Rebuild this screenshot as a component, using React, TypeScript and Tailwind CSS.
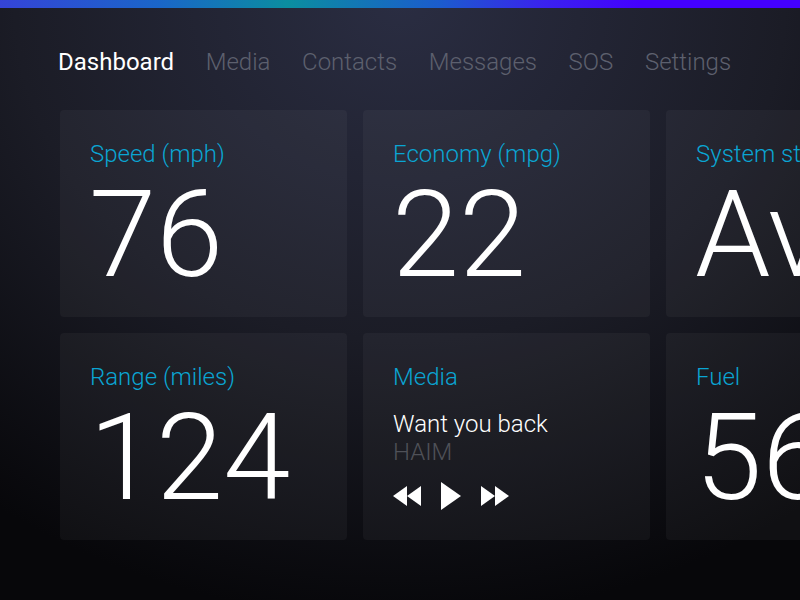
const nav = ['Dashboard', 'Media', 'Contacts', 'Messages', 'SOS', 'Settings']

const stats = [
  { label: 'Speed (mph)', value: '76' },
  { label: 'Economy (mpg)', value: '22' },
  { label: 'System status', value: 'Available' },
]

function Card({ children }: { children: React.ReactNode }) {
  return <div className="h-[207px] rounded bg-white/[0.04] pl-[30px] pt-[29px] overflow-hidden">{children}</div>
}

function Label({ text }: { text: string }) {
  return <div className="text-[24px] leading-[30px] font-light text-[#0aa5d3] whitespace-nowrap">{text}</div>
}

function Big({ value }: { value: string }) {
  return <div className="text-[121px] leading-[100px] pt-[16px] font-light text-white whitespace-nowrap -ml-[1px]">{value}</div>
}

export default function App() {
  return (
    <div
      className="w-[800px] h-[600px] overflow-hidden relative font-['Roboto',sans-serif]"
      style={{ background: 'radial-gradient(ellipse 700px 620px at 400px 0px, #2a2d42 0%, #1b1c26 55%, #07070a 100%)' }}
    >
      <div className="h-[8px] bg-[linear-gradient(90deg,#3544d8_0%,#1a66c8_20%,#0b8ea0_36%,#1b5ccd_55%,#3a22ee_68%,#4400ff_80%,#4400ff_100%)]" />

      <nav className="flex gap-[31.6px] pl-[58px] pt-[36px] h-[102px] text-[24px] font-light">
        {nav.map((n, i) => (
          <span key={n} className={i === 0 ? 'text-white font-normal' : 'text-[#5d606e]'}>{n}</span>
        ))}
      </nav>

      <div className="grid grid-cols-[287px_287px_287px] gap-[16px] pl-[60px] w-[1000px]">
        {stats.map(s => (
          <Card key={s.label}>
            <Label text={s.label} />
            <Big value={s.value} />
          </Card>
        ))}

        <Card>
          <Label text="Range (miles)" />
          <Big value="124" />
        </Card>

        <Card>
          <Label text="Media" />
          <div className="mt-[18px] text-[24px] leading-[28px] font-light text-white">Want you back</div>
          <div className="text-[24px] leading-[28px] font-light text-[#4f5158]">HAIM</div>
          <div className="flex items-center gap-[20px] mt-[16px]">
            <svg width="28" height="20" viewBox="0 0 28 20" fill="white">
              <polygon points="0,10 14,0 14,20" />
              <polygon points="14,10 28,0 28,20" />
            </svg>
            <svg width="20" height="28" viewBox="0 0 20 28" fill="white">
              <polygon points="0,0 20,14 0,28" />
            </svg>
            <svg width="28" height="20" viewBox="0 0 28 20" fill="white">
              <polygon points="0,0 14,10 0,20" />
              <polygon points="14,0 28,10 14,20" />
            </svg>
          </div>
        </Card>

        <Card>
          <Label text="Fuel" />
          <Big value="56%" />
        </Card>
      </div>
    </div>
  )
}
